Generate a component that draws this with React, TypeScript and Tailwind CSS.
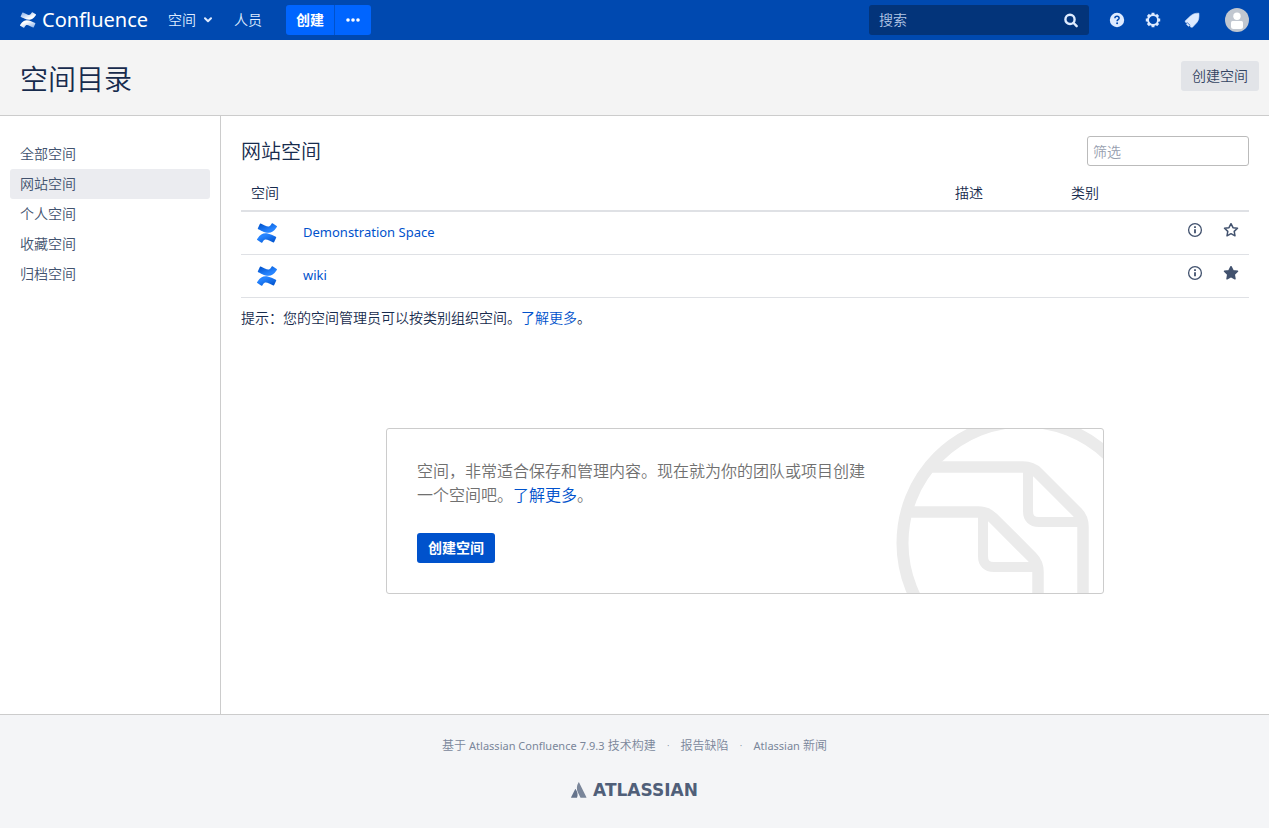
import { clsx } from 'clsx';

const SIDEBAR_ITEMS = [
  { label: '全部空间', active: false },
  { label: '网站空间', active: true },
  { label: '个人空间', active: false },
  { label: '收藏空间', active: false },
  { label: '归档空间', active: false },
];

const SPACES = [
  { name: 'Demonstration Space', starred: false },
  { name: 'wiki', starred: true },
];

const STAR_PATH = 'M8 1.7l2 4 4.5.6-3.300 3.100.8 4.400L8 11.700l-4 2.100.8-4.400L1.500 6.300 6 5.700z';

function ConfluenceMark({ id, dark, light, className }: { id: string; dark: string; light: string; className: string }) {
  return (
    <svg viewBox="0 0 24 24" className={className} aria-hidden="true">
      <defs>
        <linearGradient id={`${id}-bottom`} x1="1" y1="1" x2="0.3" y2="0.2">
          <stop offset="0.1" stopColor={dark} />
          <stop offset="0.9" stopColor={light} />
        </linearGradient>
        <linearGradient id={`${id}-top`} x1="0" y1="0" x2="0.7" y2="0.8">
          <stop offset="0.1" stopColor={dark} />
          <stop offset="0.9" stopColor={light} />
        </linearGradient>
      </defs>
      <path
        fill={`url(#${id}-bottom)`}
        d="M.87 18.257c-.248.382-.53.875-.763 1.245a.764.764 0 0 0 .255 1.04l4.965 3.054a.764.764 0 0 0 1.058-.26c.199-.332.454-.763.733-1.221 1.967-3.247 3.945-2.853 7.508-1.146l4.957 2.337a.764.764 0 0 0 1.028-.382l2.364-5.346a.764.764 0 0 0-.382-1 599.851 599.851 0 0 1-4.965-2.361C10.911 10.97 5.224 11.185.87 18.257z"
      />
      <path
        fill={`url(#${id}-top)`}
        d="M23.131 5.743c.249-.405.531-.875.764-1.25a.764.764 0 0 0-.256-1.034L18.675.404a.764.764 0 0 0-1.058.26c-.195.335-.451.763-.734 1.225-1.966 3.246-3.945 2.85-7.508 1.146L4.437.694a.764.764 0 0 0-1.027.382L1.046 6.422a.764.764 0 0 0 .382 1c1.039.49 3.105 1.467 4.965 2.361 6.698 3.246 12.392 3.029 16.738-4.04z"
      />
    </svg>
  );
}

function TopBar() {
  return (
    <header className="flex h-10 items-center bg-[#0049b0] px-5 text-sm text-[#deebff]">
      <a href="#" className="flex items-center gap-1.5 text-xl font-normal text-white">
        <ConfluenceMark id="brand" dark="#8fb4ea" light="#ffffff" className="size-4" />
        Confluence
      </a>
      <nav className="ml-5 flex items-center">
        <button type="button" className="flex items-center gap-2">
          空间
          <svg viewBox="0 0 8 6" className="h-1.5 w-2" fill="none" stroke="currentColor" strokeWidth="2" strokeLinecap="round" strokeLinejoin="round" aria-hidden="true">
            <path d="M1 1.2l3 3 3-3" />
          </svg>
        </button>
        <a href="#" className="ml-[22px]">人员</a>
        <div className="ml-6 flex h-[30px] items-stretch overflow-hidden rounded-[3px] text-white">
          <button type="button" className="bg-[#0065ff] px-2.5 font-bold">创建</button>
          <button type="button" aria-label="更多" className="flex w-[37px] items-center justify-center border-l border-[#0052cc] bg-[#0065ff]">
            <svg viewBox="0 0 14 4" className="h-1 w-3.5" fill="currentColor" aria-hidden="true">
              <circle cx="2" cy="2" r="1.8" />
              <circle cx="7" cy="2" r="1.8" />
              <circle cx="12" cy="2" r="1.8" />
            </svg>
          </button>
        </div>
      </nav>

      <form className="ml-auto flex h-[30px] w-[220px] items-center rounded-[3px] bg-[#03347a] px-2.5">
        <input type="text" aria-label="搜索" placeholder="搜索" className="min-w-0 flex-1 bg-transparent outline-none placeholder:text-[#b3c7e6]" />
        <button type="submit" aria-label="提交搜索">
          <svg viewBox="0 0 16 16" className="size-4" fill="none" stroke="currentColor" strokeWidth="2.4" strokeLinecap="round" aria-hidden="true">
            <circle cx="7" cy="7.4" r="4.6" />
            <path d="M10.600 11l3.100 3.200" />
          </svg>
        </button>
      </form>

      <div className="ml-5 flex items-center">
        <button type="button" aria-label="帮助">
          <svg viewBox="0 0 16 16" className="size-4" aria-hidden="true">
            <circle cx="8" cy="8" r="7.2" fill="#deebff" />
            <path d="M5.900 6.300c0-1.300.9-2 2.100-2s2.100.8 2.100 1.900c0 1.500-2 1.500-2 3" fill="none" stroke="#0049b0" strokeWidth="1.500" />
            <circle cx="8.100" cy="11.300" r="1" fill="#0049b0" />
          </svg>
        </button>
        <button type="button" aria-label="设置" className="ml-5">
          <svg viewBox="0 0 16 16" className="size-4" fill="none" stroke="currentColor" aria-hidden="true">
            <circle cx="8" cy="8" r="5" strokeWidth="1.900" />
            <path d="M8 .8v2.200M8 13v2.200M.8 8H3M13 8h2.200M2.900 2.900l1.500 1.500M11.600 11.600l1.500 1.500M2.900 13.100l1.500-1.500M11.600 4.400l1.500-1.500" strokeWidth="2.900" />
          </svg>
        </button>
        <button type="button" aria-label="新增功能" className="ml-[23px]">
          <svg viewBox="0 0 16 16" className="size-4" fill="currentColor" stroke="currentColor" strokeWidth="0.600" strokeLinejoin="round" aria-hidden="true">
            <path d="M14.900 1.200C11 1 8.600 2 6.400 4.100L1.200 8.900l.2 1.300 2.100.5-1 1.600 1.900 2 1.600-1.100.6 1.900 1.800.2 4.500-4.800c1.800-2.200 2.300-5 2-9.300z" />
            <path d="M3.300 10.700l2.900 2.700" stroke="#0049b0" strokeWidth="0.700" />
          </svg>
        </button>
        <button type="button" aria-label="用户菜单" className="ml-[25px]">
          <svg viewBox="0 0 24 24" className="size-6" aria-hidden="true">
            <circle cx="12" cy="12" r="12" fill="#c1c7d0" />
            <circle cx="12" cy="8.300" r="3.700" fill="#fff" />
            <path d="M6 14.500q0-1.500 1.500-1.500h9q1.500 0 1.500 1.500V18.500q0 2.500-2.500 2.500h-7Q6 21 6 18.500z" fill="#fff" />
          </svg>
        </button>
      </div>
    </header>
  );
}

function Sidebar() {
  return (
    <nav aria-label="空间分类" className="w-[221px] shrink-0 border-r border-[#ccc] px-2.5 pt-[23px]">
      <ul>
        {SIDEBAR_ITEMS.map((item) => (
          <li key={item.label}>
            <a
              href="#"
              className={clsx(
                'flex h-[30px] items-center rounded-[3px] px-2.5 text-sm text-[#42526e]',
                item.active && 'bg-[#ebecf0]',
              )}
            >
              {item.label}
            </a>
          </li>
        ))}
      </ul>
    </nav>
  );
}

function SpacesTable() {
  return (
    <table className="w-full table-fixed border-collapse text-left text-sm">
      <colgroup>
        <col className="w-[52px]" />
        <col />
        <col className="w-[116px]" />
        <col className="w-[116px]" />
        <col className="w-9" />
        <col className="w-9" />
      </colgroup>
      <thead>
        <tr className="h-[45px] border-b-2 border-[#dfe1e5]">
          <th colSpan={2} className="px-2.5 pt-2.5 font-[350]">空间</th>
          <th className="px-2.5 pt-2.5 font-[350]">描述</th>
          <th className="px-2.5 pt-2.5 font-[350]">类别</th>
          <th colSpan={2} />
        </tr>
      </thead>
      <tbody>
        {SPACES.map((space, i) => (
          <tr key={space.name} className="h-[43px] border-b border-[#dfe1e5]">
            <td className="pl-4">
              <ConfluenceMark id={`space-${i}`} dark="#0052cc" light="#2684ff" className="size-5" />
            </td>
            <td className="px-2.5 pb-0.5">
              <a href="#" className="text-[13px] font-normal text-[#0052cc]">{space.name}</a>
            </td>
            <td />
            <td />
            <td className="pb-1.5 text-[#42526e]">
              <button type="button" aria-label="空间详情" className="mx-auto block">
                <svg viewBox="0 0 16 16" className="size-4" fill="none" stroke="currentColor" aria-hidden="true">
                  <circle cx="8" cy="8" r="6.400" strokeWidth="1.300" />
                  <path d="M8 7.200v4" strokeWidth="1.800" />
                  <path d="M8 4.300v1.700" strokeWidth="1.800" />
                </svg>
              </button>
            </td>
            <td className="pb-1.5 text-[#42526e]">
              <button type="button" aria-label="收藏" className="mx-auto block">
                <svg viewBox="0 0 16 16" className="size-4" fill={space.starred ? 'currentColor' : 'none'} stroke="currentColor" strokeWidth="1.500" strokeLinejoin="round" aria-hidden="true">
                  <path d={STAR_PATH} />
                </svg>
              </button>
            </td>
          </tr>
        ))}
      </tbody>
    </table>
  );
}

function CreateSpaceCard() {
  return (
    <section className="relative mx-auto mt-[100px] w-full max-w-[718px] overflow-hidden rounded-[3px] border border-[#ccc] p-[30px]">
      <svg viewBox="0 0 208 164" className="absolute top-0 right-0 h-[164px] w-[208px]" fill="none" stroke="#ebebeb" aria-hidden="true">
        <circle cx="129" cy="114" r="121.500" strokeWidth="12" />
        <path d="M32 38H128Q137 38 143 44L182 83Q188 89 188 98V170" strokeWidth="11.500" />
        <path d="M133 42V82Q133 93 144 93H188" strokeWidth="10" />
        <path d="M12 83H83Q92 83 98 89L137 128Q143 134 143 143V170" strokeWidth="11.500" />
        <path d="M88 87V127Q88 138 99 138H143" strokeWidth="10" />
      </svg>
      <p className="max-w-[460px] text-base text-[#707070]">
        空间，非常适合保存和管理内容。现在就为你的团队或项目创建一个空间吧。
        <a href="#" className="text-[#0052cc]">了解更多</a>。
      </p>
      <button type="button" className="mt-[26px] block h-[30px] rounded-[3px] bg-[#0052cc] px-[11px] text-sm font-bold text-white">
        创建空间
      </button>
    </section>
  );
}

function Footer() {
  return (
    <footer className="flex h-[114px] flex-col items-center border-t border-[#ccc] bg-[#f4f5f7] pt-[23px] text-xs text-[#7a869a]">
      <ul className="flex items-center gap-[11px]">
        <li>
          基于 <a href="#" className="text-[11px] font-normal">Atlassian Confluence</a> <span className="text-[11px] font-normal">7.9.3</span> 技术构建
        </li>
        <li aria-hidden="true">·</li>
        <li><a href="#">报告缺陷</a></li>
        <li aria-hidden="true">·</li>
        <li><a href="#"><span className="text-[11px] font-normal">Atlassian</span> 新闻</a></li>
      </ul>
      <a href="#" className="mt-6 flex items-center gap-1.5 font-['DejaVu_Sans',sans-serif] text-[17px] leading-6 font-bold text-[#505f79]">
        <svg viewBox="0 0 16 16" className="size-4" fill="#7a869a" aria-hidden="true">
          <path d="M4.700 7.300c-.2-.3-.5-.2-.7.100L.1 15.200c-.1.300 0 .6.400.6h5.200c.2 0 .3-.1.400-.3 1.100-2.300.4-5.900-1.400-8.200z" fill="#66748c" />
          <path d="M7.500.500c-2.100 3.400-2 7.100-.6 9.900l2.500 5.100c.1.200.2.300.4.300H15c.4 0 .5-.3.400-.6L8.100.500c-.1-.3-.4-.3-.6 0z" />
        </svg>
        ATLASSIAN
      </a>
    </footer>
  );
}

export default function App() {
  return (
    <div className="flex min-h-screen flex-col bg-white font-['Noto_Sans','Noto_Sans_CJK_SC',sans-serif] font-[350] text-[#172b4d]">
      <TopBar />
      <div className="flex h-[76px] items-center justify-between border-b border-[#ccc] bg-[#f4f4f4] pr-2.5 pl-5">
        <h1 className="pt-0.5 text-[28px]">空间目录</h1>
        <button type="button" className="mb-1 h-[30px] rounded-[3px] bg-[#e2e4e8] px-[11px] text-sm text-[#344563]">
          创建空间
        </button>
      </div>
      <div className="flex flex-1">
        <Sidebar />
        <main className="min-w-0 flex-1 px-5 pt-5 pb-10">
          <div className="flex h-[30px] items-center justify-between">
            <h2 className="pt-0.5 text-xl">网站空间</h2>
            <input
              type="text"
              aria-label="筛选"
              placeholder="筛选"
              className="h-[30px] w-[162px] rounded-[3px] border border-[#bbb] px-[5px] text-sm placeholder:text-[#97a0af]"
            />
          </div>
          <SpacesTable />
          <p className="mt-2.5 text-sm">
            提示：您的空间管理员可以按类别组织空间。<a href="#" className="text-[#0052cc]">了解更多</a>。
          </p>
          <CreateSpaceCard />
        </main>
      </div>
      <Footer />
    </div>
  );
}
